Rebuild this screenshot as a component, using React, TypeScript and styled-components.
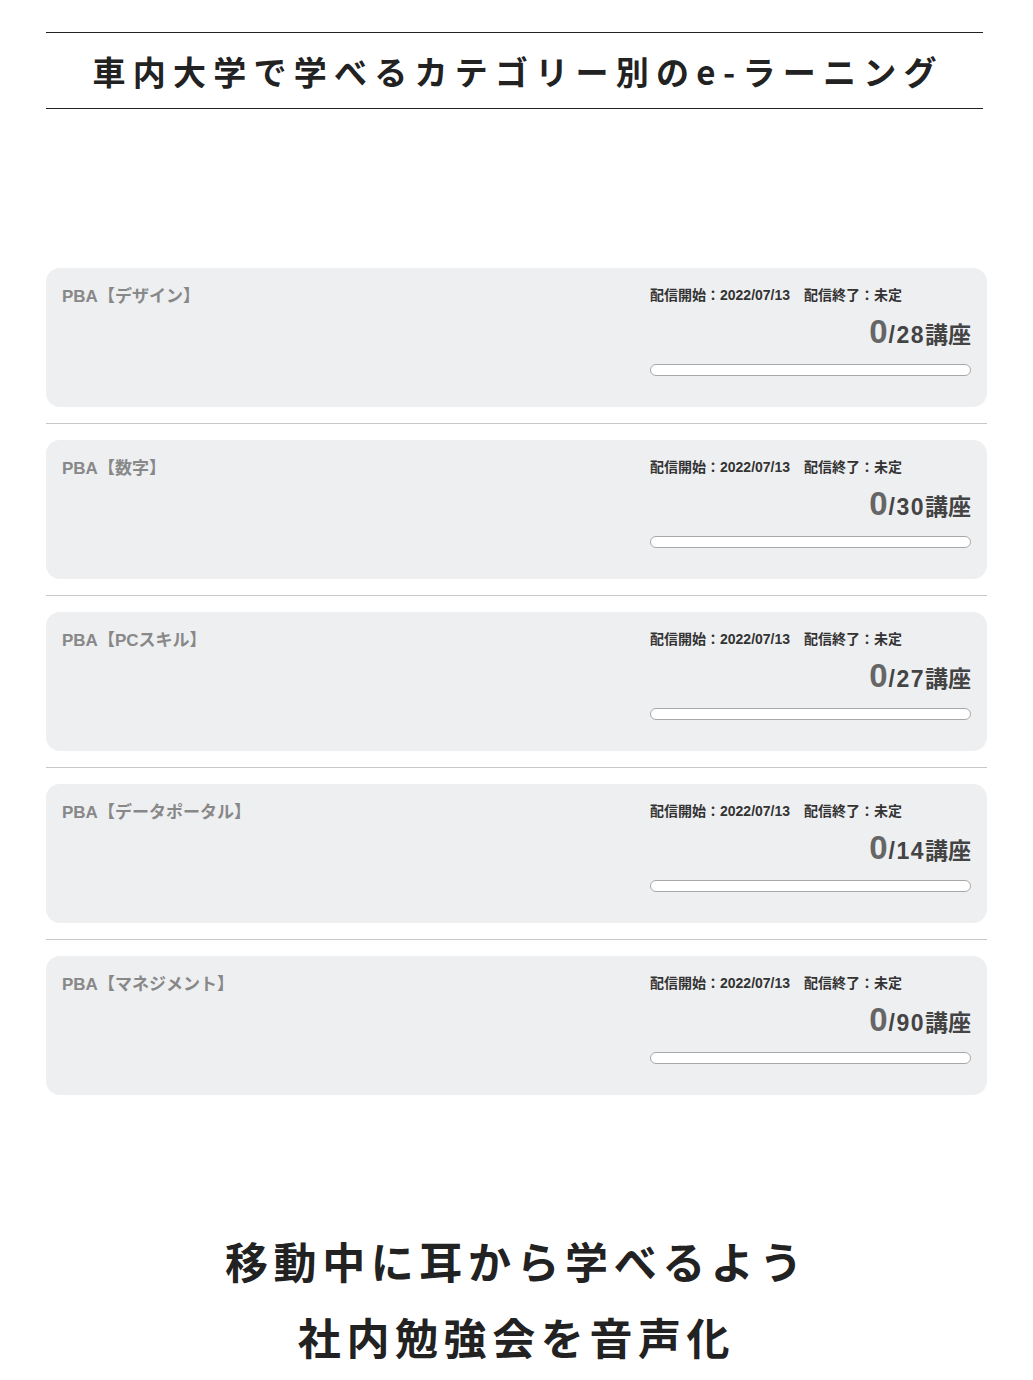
import React from "react";
import styled, { createGlobalStyle } from "styled-components";

const GlobalStyle = createGlobalStyle`
  body {
    margin: 0;
    background: #ffffff;
    font-family: "Liberation Sans", "Noto Sans CJK JP", sans-serif;
  }
`;

const Page = styled.div`
  width: 1033px;
  padding: 32px 46px 0 46px;
  box-sizing: border-box;
`;

const Heading = styled.h2`
  margin: 0 4px 0 0;
  height: 77px;
  border-top: 1.5px solid #222;
  border-bottom: 1.5px solid #222;
  box-sizing: border-box;
  display: flex;
  align-items: center;
  justify-content: center;
  font-family: "Noto Sans CJK JP", sans-serif;
  font-size: 33px;
  font-weight: 700;
  letter-spacing: 0.22em;
  padding-left: 0.22em;
  color: #222;
`;

const CourseList = styled.div`
  margin-top: 159px;
  display: flex;
  flex-direction: column;
`;

const Divider = styled.hr`
  margin: 16px 0;
  border: none;
  border-top: 1px solid #c8c8c8;
  height: 0;
`;

const Card = styled.div`
  height: 139px;
  box-sizing: border-box;
  background: #eeeff1;
  border-radius: 14px;
  padding: 20px 16px 0 16px;
  display: flex;
  justify-content: space-between;
`;

const CardTitle = styled.div`
  font-family: "Liberation Sans", "Noto Sans CJK JP", sans-serif;
  font-size: 17px;
  font-weight: 700;
  color: #888;
  line-height: 20px;
  margin-top: -1px;
`;

const Meta = styled.div`
  width: 321px;
  display: flex;
  flex-direction: column;
`;

const Dates = styled.div`
  font-family: "Liberation Sans", "Noto Sans CJK JP", sans-serif;
  font-size: 14px;
  font-weight: 700;
  color: #333;
  line-height: 14px;
  white-space: pre;
`;

const Count = styled.div`
  margin-top: 14px;
  text-align: right;
  color: #444;
  line-height: 32px;
  font-size: 23px;
  font-weight: 700;
  letter-spacing: 1.5px;
  font-family: "Liberation Sans", "Noto Sans CJK JP", sans-serif;
`;

const Total = styled.span`
  letter-spacing: 0;
`;

const Done = styled.span`
  font-size: 33px;
  color: #666;
  font-weight: 700;
  letter-spacing: 1px;
`;

const Progress = styled.div`
  margin-top: 13px;
  height: 12px;
  box-sizing: border-box;
  background: #fff;
  border: 1px solid #a8a8a8;
  border-radius: 6px;
`;

const Lead = styled.p`
  margin: 127px 0 0 0;
  text-align: center;
  font-family: "Noto Sans CJK JP", sans-serif;
  font-size: 43px;
  font-weight: 700;
  line-height: 76px;
  letter-spacing: 0.13em;
  color: #222;
`;

interface Course {
  name: string;
  total: number;
}

const courses: Course[] = [
  { name: "PBA【デザイン】", total: 28 },
  { name: "PBA【数字】", total: 30 },
  { name: "PBA【PCスキル】", total: 27 },
  { name: "PBA【データポータル】", total: 14 },
  { name: "PBA【マネジメント】", total: 90 },
];

const App = () => {
  return (
    <Page>
      <GlobalStyle />
      <Heading>車内大学で学べるカテゴリー別のe-ラーニング</Heading>
      <CourseList>
        {courses.map((c, i) => (
          <React.Fragment key={c.name}>
            {i > 0 && <Divider />}
            <Card>
              <CardTitle>{c.name}</CardTitle>
              <Meta>
                <Dates>配信開始：2022/07/13　配信終了：未定</Dates>
                <Count>
                  <Done>0</Done>/{c.total}
                  <Total>講座</Total>
                </Count>
                <Progress />
              </Meta>
            </Card>
          </React.Fragment>
        ))}
      </CourseList>
      <Lead>
        移動中に耳から学べるよう
        <br />
        社内勉強会を音声化
      </Lead>
    </Page>
  );
};

export default App;
